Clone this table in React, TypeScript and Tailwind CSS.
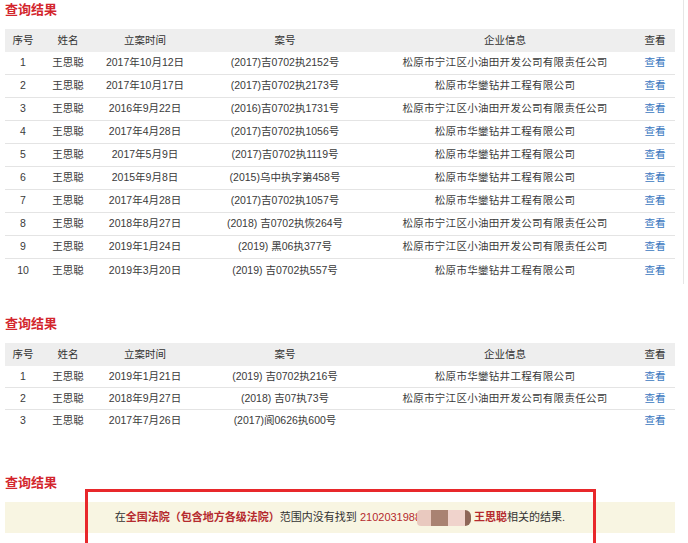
import React from "react";

type Row = { no: string; name: string; date: string; caseNo: string; company: string };

const rows1: Row[] = [
  { no: "1", name: "王思聪", date: "2017年10月12日", caseNo: "(2017)吉0702执2152号", company: "松原市宁江区小油田开发公司有限责任公司" },
  { no: "2", name: "王思聪", date: "2017年10月17日", caseNo: "(2017)吉0702执2173号", company: "松原市华鑾钻井工程有限公司" },
  { no: "3", name: "王思聪", date: "2016年9月22日", caseNo: "(2016)吉0702执1731号", company: "松原市宁江区小油田开发公司有限责任公司" },
  { no: "4", name: "王思聪", date: "2017年4月28日", caseNo: "(2017)吉0702执1056号", company: "松原市华鑾钻井工程有限公司" },
  { no: "5", name: "王思聪", date: "2017年5月9日", caseNo: "(2017)吉0702执1119号", company: "松原市华鑾钻井工程有限公司" },
  { no: "6", name: "王思聪", date: "2015年9月8日", caseNo: "(2015)乌中执字第458号", company: "松原市华鑾钻井工程有限公司" },
  { no: "7", name: "王思聪", date: "2017年4月28日", caseNo: "(2017)吉0702执1057号", company: "松原市华鑾钻井工程有限公司" },
  { no: "8", name: "王思聪", date: "2018年8月27日", caseNo: "(2018) 吉0702执恢264号", company: "松原市宁江区小油田开发公司有限责任公司" },
  { no: "9", name: "王思聪", date: "2019年1月24日", caseNo: "(2019) 黑06执377号", company: "松原市宁江区小油田开发公司有限责任公司" },
  { no: "10", name: "王思聪", date: "2019年3月20日", caseNo: "(2019) 吉0702执557号", company: "松原市华鑾钻井工程有限公司" },
];

const rows2: Row[] = [
  { no: "1", name: "王思聪", date: "2019年1月21日", caseNo: "(2019) 吉0702执216号", company: "松原市华鑾钻井工程有限公司" },
  { no: "2", name: "王思聪", date: "2018年9月27日", caseNo: "(2018) 吉07执73号", company: "松原市宁江区小油田开发公司有限责任公司" },
  { no: "3", name: "王思聪", date: "2017年7月26日", caseNo: "(2017)阆0626执600号", company: "" },
];

const FONT = { fontFamily: '"Liberation Sans", "Noto Sans CJK SC", sans-serif' };
const COLS = "grid grid-cols-[36px_54px_100px_180px_260px_40px]";

function Title() {
  return (
    <div className="h-[18px] flex items-center text-[13px] font-bold text-[#d3262d] leading-none">
      查询结果
    </div>
  );
}

function Table({ rows, rowH }: { rows: Row[]; rowH: string }) {
  return (
    <div className="w-[670px] text-[10.5px] text-[#333]">
      <div className={`${COLS} h-[23px] items-center bg-[#eeeeee] text-center`}>
        <div>序号</div>
        <div>姓名</div>
        <div>立案时间</div>
        <div>案号</div>
        <div>企业信息</div>
        <div>查看</div>
      </div>
      {rows.map((r, i) => (
        <div
          key={i}
          className={`${COLS} ${rowH} items-center text-center text-[#3a3a3a] ${
            i < rows.length - 1 ? "border-b border-[#e4e4e4]" : ""
          }`}
        >
          <div>{r.no}</div>
          <div>{r.name}</div>
          <div>{r.date}</div>
          <div>{r.caseNo}</div>
          <div className="tracking-[0.3px]">{r.company}</div>
          <div className="text-[#3b78bf]">查看</div>
        </div>
      ))}
    </div>
  );
}

export default function App() {
  return (
    <div className="relative w-[688px] h-[543px] bg-white overflow-hidden" style={FONT}>
      <div className="w-[684px] h-[284px] border-r border-[#e6e6e6] pl-[5px]">
        <Title />
        <div className="mt-[11px]">
          <Table rows={rows1} rowH="h-[23px]" />
        </div>
      </div>

      <div className="pl-[5px] mt-[30px]">
        <Title />
        <div className="mt-[11px]">
          <Table rows={rows2} rowH="h-[22px]" />
        </div>
      </div>

      <div className="pl-[5px] mt-[41px]">
        <Title />
        <div className="mt-[11px] w-[670px] h-[31px] bg-[#f8f5e2] flex items-center justify-center text-[11px] text-[#333]">
          <span>在</span>
          <span className="text-[#b52a2e] font-bold">全国法院（包含地方各级法院）</span>
          <span>范围内没有找到&nbsp;</span>
          <span className="text-[#b52a2e]">2102031988</span>
          <span className="relative inline-flex h-[16px] w-[54px] items-center -ml-[4px]">
            <span className="h-[16px] w-[14px] bg-[#e9c9bf] rounded-l-sm" />
            <span className="h-[16px] w-[17px] bg-[#a98272]" />
            <span className="h-[16px] w-[17px] bg-[#f0d3cc]" />
            <span className="h-[16px] w-[6px] bg-[#8e6658] rounded-r-full" />
          </span>
          <span className="ml-[3px] text-[#b52a2e] font-bold">王思聪</span>
          <span>相关的结果.</span>
        </div>
      </div>

      <div className="absolute left-[85px] top-[489px] w-[511px] h-[80px] border-[3px] border-[#e8282b]" />
    </div>
  );
}
